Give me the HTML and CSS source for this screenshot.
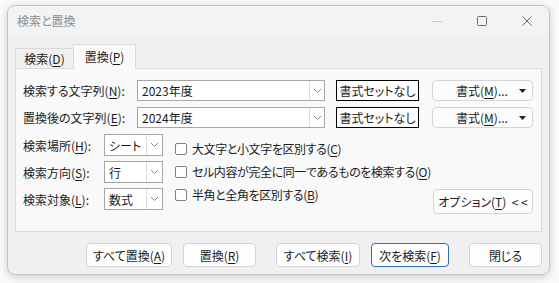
FILE: index.html
```html
<!DOCTYPE html>
<html lang="ja">
<head>
<meta charset="utf-8">
<link rel="stylesheet" href="styles.css">
</head>
<body>
<div class="window">
  <div class="titlebar">
    <span class="title">検索と置換</span>
    <div class="controls">
      <div class="ctl"><svg width="12" height="12" viewBox="0 0 12 12"><path d="M1 6.5h10" stroke="#c9c9c9" stroke-width="1"/></svg></div>
      <div class="ctl"><svg width="12" height="12" viewBox="0 0 12 12"><rect x="1.5" y="1.5" width="9" height="9" rx="1" fill="none" stroke="#6b6b6b" stroke-width="1"/></svg></div>
      <div class="ctl"><svg width="12" height="12" viewBox="0 0 12 12"><path d="M1.5 1.5l9 9M10.5 1.5l-9 9" stroke="#6b6b6b" stroke-width="1"/></svg></div>
    </div>
  </div>
  <div class="content">
    <div class="tabs">
      <div class="tab">検索(<u>D</u>)</div>
      <div class="tab active">置換(<u>P</u>)</div>
    </div>
    <div class="panel">
      <div class="row">
        <span class="label">検索する文字列(<u>N</u>):</span>
        <div class="combo wide"><span class="val">2023年度</span><span class="drop"><svg width="9" height="6" viewBox="0 0 9 6"><path d="M1 1l3.5 3.5L8 1" fill="none" stroke="#8a8a8a"/></svg></span></div>
        <div class="preview">書式セットなし</div>
        <div class="fmt"><span>書式(<u>M</u>)...</span><svg class="tri" width="7" height="4" viewBox="0 0 7 4"><path d="M0 0h7L3.5 4z" fill="#222"/></svg></div>
      </div>
      <div class="row">
        <span class="label">置換後の文字列(<u>E</u>):</span>
        <div class="combo wide"><span class="val">2024年度</span><span class="drop"><svg width="9" height="6" viewBox="0 0 9 6"><path d="M1 1l3.5 3.5L8 1" fill="none" stroke="#8a8a8a"/></svg></span></div>
        <div class="preview">書式セットなし</div>
        <div class="fmt"><span>書式(<u>M</u>)...</span><svg class="tri" width="7" height="4" viewBox="0 0 7 4"><path d="M0 0h7L3.5 4z" fill="#222"/></svg></div>
      </div>
      <div class="lower">
        <div class="opts">
          <div class="orow">
            <span class="olabel">検索場所(<u>H</u>):</span>
            <div class="combo small"><span class="val">シート</span><span class="drop"><svg width="9" height="6" viewBox="0 0 9 6"><path d="M1 1l3.5 3.5L8 1" fill="none" stroke="#8a8a8a"/></svg></span></div>
          </div>
          <div class="orow">
            <span class="olabel">検索方向(<u>S</u>):</span>
            <div class="combo small"><span class="val">行</span><span class="drop"><svg width="9" height="6" viewBox="0 0 9 6"><path d="M1 1l3.5 3.5L8 1" fill="none" stroke="#8a8a8a"/></svg></span></div>
          </div>
          <div class="orow">
            <span class="olabel">検索対象(<u>L</u>):</span>
            <div class="combo small"><span class="val">数式</span><span class="drop"><svg width="9" height="6" viewBox="0 0 9 6"><path d="M1 1l3.5 3.5L8 1" fill="none" stroke="#8a8a8a"/></svg></span></div>
          </div>
        </div>
        <div class="checks">
          <label class="chk"><span class="box"></span>大文字と小文字を区別する(<u>C</u>)</label>
          <label class="chk"><span class="box"></span>セル内容が完全に同一であるものを検索する(<u>O</u>)</label>
          <label class="chk"><span class="box"></span>半角と全角を区別する(<u>B</u>)</label>
        </div>
        <div class="optbtn-wrap"><div class="btn optbtn">オプション(<u>T</u>)&nbsp;&nbsp;&lt; &lt;</div></div>
      </div>
    </div>
    <div class="buttons">
      <div class="btn b1">すべて置換(<u>A</u>)</div>
      <div class="btn b2">置換(<u>R</u>)</div>
      <div class="btn b3 sep">すべて検索(<u>I</u>)</div>
      <div class="btn b4 primary">次を検索(<u>F</u>)</div>
      <div class="btn b5 sep">閉じる</div>
    </div>
  </div>
</div>
</body>
</html>
```
FILE: styles.css
```css
* { box-sizing: border-box; }
html, body { margin: 0; padding: 0; }
body {
  width: 559px;
  height: 283px;
  background: #fafafa;
  font-family: "Noto Sans CJK JP", "Noto Sans", sans-serif;
  font-size: 12px;
  font-feature-settings: "palt";
  color: #1b1b1b;
  overflow: hidden;
}
u { text-underline-offset: 2px; }
.window {
  margin: 5px 0 0 7px;
  width: 543px;
  height: 270px;
  border: 1px solid #c4c4c4;
  border-radius: 8px;
  background: #f0f0f0;
  box-shadow: 0 2px 8px rgba(0,0,0,0.18);
  overflow: hidden;
  display: flex;
  flex-direction: column;
}
.titlebar {
  height: 30px;
  display: flex;
  align-items: center;
  padding-left: 9px;
  background: #f3f3f3;
  flex: none;
}
.title { color: #8e8e8e; font-size: 12px; line-height: 1; }
.controls { margin-left: auto; display: flex; height: 100%; }
.ctl { width: 45px; display: flex; align-items: center; justify-content: center; }
.content { padding: 8px 7px 0 7px; display: flex; flex-direction: column; }
.tabs { display: flex; align-items: flex-end; height: 24px; position: relative; z-index: 1; }
.tab {
  height: 20px;
  padding: 0 6px;
  border: 1px solid #dadada;
  border-bottom: none;
  background: #f0f0f0;
  display: flex;
  align-items: center;
  justify-content: center;
  width: 59px;
  color: #1b1b1b;
}
.tab.active {
  height: 25px;
  width: 63px;
  margin-left: -1px;
  margin-bottom: -1px;
  background: #f9f9f9;
  padding-bottom: 1px;
}
.panel {
  height: 164px;
  border: 1px solid #dadada;
  background: #f9f9f9;
  padding: 11px 8px 0 7px;
}
.row { display: flex; align-items: center; height: 21px; margin-bottom: 6px; }
.label { width: 114px; white-space: nowrap; }
.combo {
  display: flex;
  height: 21px;
  border: 1px solid #a6a6a6;
  background: #fff;
}
.combo .val { flex: 1; padding-left: 4px; display: flex; align-items: center; white-space: nowrap; overflow: hidden; }
.combo .drop {
  width: 15px;
  border-left: 1px solid #dcdcdc;
  display: flex;
  align-items: center;
  justify-content: center;
}
.combo.wide { width: 188px; }
.preview {
  margin-left: 11px;
  width: 83px;
  height: 21px;
  border: 1.5px solid #000;
  background: #fff;
  display: flex;
  align-items: center;
  justify-content: center;
  white-space: nowrap;
}
.fmt {
  margin-left: 13px;
  width: 101px;
  height: 21px;
  border: 1px solid #d6d6d6;
  border-radius: 4px;
  background: #fcfcfc;
  display: flex;
  align-items: center;
  padding: 0 6px 0 0;
}
.fmt span { flex: 1; text-align: center; padding-left: 12px; }
.lower { display: flex; margin-top: 6px; }
.opts { width: 149px; }
.orow { display: flex; align-items: center; height: 22px; margin-bottom: 5px; }
.olabel { width: 81px; white-space: nowrap; }
.combo.small { width: 59px; height: 22px; }
.combo.small .drop { width: 16px; }
.checks { display: flex; flex-direction: column; padding-top: 3px; margin-left: 3px; letter-spacing: -0.4px; }
.chk { display: flex; align-items: center; height: 23px; white-space: nowrap; }
.box {
  width: 12px;
  height: 12px;
  border: 1px solid #808080;
  border-radius: 2px;
  background: #fff;
  margin-right: 5px;
}
.optbtn-wrap { margin-left: auto; display: flex; align-items: flex-end; padding-bottom: 1px; }
.btn {
  height: 24px;
  border: 1px solid #d3d3d3;
  border-radius: 4px;
  background: #fdfdfd;
  display: flex;
  align-items: center;
  justify-content: center;
  white-space: nowrap;
}
.optbtn { width: 100px; height: 25px; }
.buttons { display: flex; margin-top: 11px; padding-left: 71px; }
.b1 { width: 86px; }
.b2 { width: 73px; margin-left: 11px; }
.b3 { width: 84px; }
.b4 { width: 78px; margin-left: 11px; }
.b5 { width: 73px; }
.sep { margin-left: 20px; }
.primary { border-color: #2a6fbf; }
```
